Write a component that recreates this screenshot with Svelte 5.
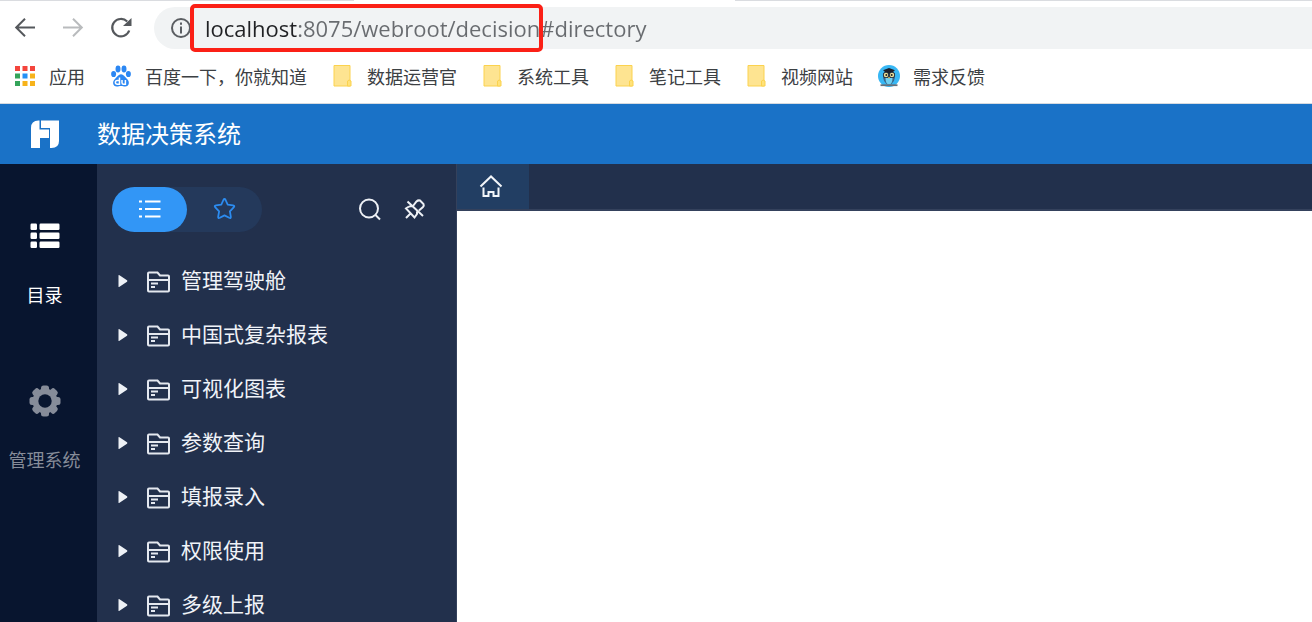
<script>
  let url = $state('localhost:8075/webroot/decision#directory');
  let view = $state('list');

  const bookmarks = [
    { label: '应用', icon: 'apps' },
    { label: '百度一下，你就知道', icon: 'baidu' },
    { label: '数据运营官', icon: 'folder' },
    { label: '系统工具', icon: 'folder' },
    { label: '笔记工具', icon: 'folder' },
    { label: '视频网站', icon: 'folder' },
    { label: '需求反馈', icon: 'owl' },
  ];

  const appColors = ['#f4453c', '#f4453c', '#f4453c', '#34a45a', '#2490f5', '#f7b31b', '#34a45a', '#f7b31b', '#f7b31b'];

  const folders = ['管理驾驶舱', '中国式复杂报表', '可视化图表', '参数查询', '填报录入', '权限使用', '多级上报'];
</script>

<div class="page">
  <div class="browser">
    <div class="tabline"><span></span><span></span></div>
    <div class="toolbar">
      <button aria-label="后退">
        <svg width="22" height="22" viewBox="0 0 22 22" fill="none" stroke="#55585c" stroke-width="2"><path d="M21 10.500H2.500M11 1.800L2.200 10.500l8.800 8.700" /></svg>
      </button>
      <button aria-label="前进">
        <svg width="22" height="22" viewBox="0 0 22 22" fill="none" stroke="#b9bbbd" stroke-width="2"><path d="M1 10.500h18.500M11 1.800l8.800 8.700-8.800 8.700" /></svg>
      </button>
      <button aria-label="刷新">
        <svg width="22" height="22" viewBox="0 0 22 22"><path d="M19.200 13.500A8.700 8.700 0 1 1 17.200 4.600" fill="none" stroke="#55585c" stroke-width="2.200" /><path d="M21.500 1V9H13z" fill="#55585c" /></svg>
      </button>
      <div class="omnibox">
        <svg width="22" height="22" viewBox="0 0 22 22"><circle cx="11" cy="11" r="9" fill="none" stroke="#5b5e62" stroke-width="2" /><path d="M10 5.500h2v2.200h-2zM10 9.500h2v7h-2z" fill="#5b5e62" /></svg>
        <input class="url" aria-label="地址" bind:value={url} />
        <div class="marker"></div>
      </div>
    </div>
    <nav class="bookmarks">
      {#each bookmarks as b}
        <a href="#directory">
          {#if b.icon === 'apps'}
            <svg width="20" height="20" viewBox="0 0 20 20">
              {#each appColors as c, i}
                <rect x={(i % 3) * 7.5} y={Math.floor(i / 3) * 7.5} width="5" height="5" fill={c} />
              {/each}
            </svg>
          {:else if b.icon === 'baidu'}
            <svg width="20" height="22" viewBox="0 0 20 22" fill="#2b87f3">
              <ellipse cx="2.600" cy="9" rx="2.500" ry="3.100" />
              <ellipse cx="7" cy="4" rx="2.500" ry="3.400" />
              <ellipse cx="13" cy="4" rx="2.500" ry="3.400" />
              <ellipse cx="17.400" cy="9" rx="2.500" ry="3.100" />
              <path d="M10 9.300c2.600 0 3.600 2.400 5.600 4.100 3.600 3 2.700 8-1.400 8-1.600 0-2.600-.5-4.200-.5s-2.600.5-4.200.5c-4.100 0-5-5-1.400-8C6.400 11.700 7.400 9.300 10 9.300z" />
              <path d="M8.500 12.500v6.800H6.300a1.900 1.900 0 0 1 0-3.900h2.200M11 15v2.800c0 1 .5 1.500 1.400 1.500h2V15" fill="none" stroke="#fff" stroke-width="1.500" />
            </svg>
          {:else if b.icon === 'folder'}
            <svg width="20" height="22" viewBox="0 0 20 22" stroke="#fbd24e"><path d="M1 .5h16v20.500H1z" fill="#fee491" /><path d="M14.500 21v-5q1.500-2 3.500 0v5z" fill="#ffe27a" /></svg>
          {:else}
            <svg width="20" height="22" viewBox="1 0 20 22" overflow="visible">
              <circle cx="11" cy="11" r="11" fill="#38b7f4" />
              <path d="M5 8Q4.500 19 11 19.500 17.500 19 17 8z" fill="#3a6588" />
              <path d="M7.500 13h7q0 6-3.500 6.500Q7.500 19 7.500 13z" fill="#6fd0f2" />
              <path d="M5 5.200L11 3l6 2.200-1.500 1V9h-9V6.200z" fill="#1c1f2b" />
              <circle cx="8" cy="10" r="3.100" fill="#263442" /><circle cx="14" cy="10" r="3.100" fill="#263442" />
              <circle cx="8" cy="10" r="2.200" fill="#efe19b" /><circle cx="14" cy="10" r="2.200" fill="#efe19b" />
              <circle cx="8.300" cy="10" r="1" fill="#222" /><circle cx="13.700" cy="10" r="1" fill="#222" />
              <path d="M10 12h2l-1 2z" fill="#e8b13c" />
              <path d="M2.500 20.200h17" stroke="#66717c" stroke-width="1.800" />
            </svg>
          {/if}
          <span>{b.label}</span>
        </a>
      {/each}
    </nav>
  </div>

  <header>
    <svg width="28" height="28" viewBox="0 0 28 28" fill="#fff">
      <path d="M7.500.5H8.500V9.500H18V18H9V28H0V8Q0 .5 7.500.5z" />
      <path d="M10 .5H28V21Q28 28 20.500 28H19V8H10z" />
    </svg>
    <h1>数据决策系统</h1>
  </header>

  <div class="body">
    <nav class="rail">
      <button class="active">
        <svg width="32" height="32" viewBox="0 0 32 32" fill="#fff">
          {#each [3.5, 12.5, 21.5] as y}
            <rect x="1.500" {y} width="6.500" height="6.500" rx="1.200" /><rect x="10.500" {y} width="20" height="6.500" rx="1.200" />
          {/each}
        </svg>
        <span>目录</span>
      </button>
      <button>
        <svg width="32" height="32" viewBox="-16 -16 32 32">
          <g fill="#868c99">
            {#each [0, 45, 90, 135] as a}
              <rect x="-4" y="-15.500" width="8" height="31" rx="2.500" transform="rotate({a})" />
            {/each}
            <circle r="12.500" />
          </g>
          <circle r="6.700" fill="#08152f" />
        </svg>
        <span>管理系统</span>
      </button>
    </nav>

    <aside>
      <div class="tools">
        <div class="switch">
          <button class:on={view === 'list'} aria-label="目录列表" onclick={() => (view = 'list')}>
            <svg width="24" height="24" viewBox="0 0 24 24" fill="none" stroke={view === 'list' ? '#fff' : '#3296f6'} stroke-width="2"><path d="M1 3.500h3M7 3.500H22.500M1 11h3M7 11H22.500M1 18.500h3M7 18.500H22.500" /></svg>
          </button>
          <button class:on={view === 'star'} aria-label="收藏" onclick={() => (view = 'star')}>
            <svg width="24" height="24" viewBox="0.500 1 24 24" fill="none" stroke={view === 'star' ? '#fff' : '#2c8cf0'} stroke-width="1.800" stroke-linejoin="round"><path d="M10.900 3Q12 1 13.100 3l2.100 4.600 5.300.8q2.200.4.700 2l-3.800 3.900.9 5.300q.3 2.100-1.600 1.200L12 18.400l-4.700 2.400q-1.900.9-1.600-1.200l.9-5.300-3.800-3.900q-1.500-1.600.7-2l5.300-.8z" /></svg>
          </button>
        </div>
        <div class="actions">
          <button aria-label="搜索">
            <svg width="24" height="24" viewBox="0 0 24 24" fill="none" stroke="#eef1f6" stroke-width="2"><circle cx="11" cy="10.500" r="9" /><path d="M17.500 17l4.500 4.500" /></svg>
          </button>
          <button aria-label="取消固定">
            <svg width="24" height="24" viewBox="0 1 24 24" fill="none" stroke="#eef1f6" stroke-width="2"><path d="M4.500 4.500L20 19M3 21l4.500-4.500M6 9.500L3 11.500l8.500 9 2.500-3.500V14.500M10 9L13.500 4.500Q15 3 17 3.500l3.500 3.500q.7 1.500-.5 3L16 13.500M6 9.500l3-.5" /></svg>
          </button>
        </div>
      </div>
      <ul>
        {#each folders as name}
          <li>
            <button>
              <svg width="10" height="14" viewBox="0 0 10 14"><path d="M.5 1.500Q.5.500 1.500 1.200L9 6.300q.8.700 0 1.400L1.500 12.800Q.5 13.500.5 12.500z" fill="#eef1f6" /></svg>
              <svg width="24" height="24" viewBox="0 0 24 24" fill="none" stroke="#e4e8ef" stroke-width="2"><path d="M2 21.500V4.500q0-1 1-1h8.500l2.500 3h8q1 0 1 1v14q0 1-1 1H3q-1 0-1-1zM2 11h21M5 14.500h7M5 18h4" /></svg>
              <span>{name}</span>
            </button>
          </li>
        {/each}
      </ul>
    </aside>

    <main>
      <div class="tabs">
        <button aria-label="首页">
          <svg width="24" height="24" viewBox="0 1 24 24" fill="none" stroke="#f2f5f9" stroke-width="2"><path d="M1.500 12.500L12 2.500l10.500 10M4.500 13.500v8.500h5v-4h5v4h5v-8.500" /></svg>
        </button>
      </div>
    </main>
  </div>
</div>

<style>
  :global(body) { margin: 0; background: #fff; }
  .page {
    height: 100vh;
    display: flex;
    flex-direction: column;
    overflow: hidden;
    font-family: "Noto Sans CJK SC", sans-serif;
  }
  button { border: 0; padding: 0; background: none; color: inherit; font: inherit; cursor: pointer; }
  svg { display: block; flex: none; }

  .browser { border-bottom: 1px solid #d5dae0; }
  .tabline { display: flex; justify-content: space-between; height: 1px; }
  .tabline span { width: 27%; background: #dadce0; }
  .tabline span:last-child { width: 44%; }
  .toolbar { display: flex; align-items: center; gap: 26px; padding: 6px 0 0 14px; }
  .omnibox {
    position: relative;
    flex: 1;
    display: flex;
    align-items: center;
    gap: 13px;
    height: 42px;
    margin-left: -4px;
    padding-left: 16px;
    border-radius: 21px 0 0 21px;
    background: #f1f3f4;
  }
  .url {
    flex: 1;
    min-width: 0;
    padding: 0;
    border: 0;
    outline: 0;
    font: 22px/32px "Open Sans", sans-serif;
    color: transparent;
    background: linear-gradient(90deg, #202124 92px, #686b6f 92px);
    background-clip: text;
  }
  .marker {
    position: absolute;
    left: 36px;
    top: -3px;
    width: 345px;
    height: 40px;
    border: 4px solid #fb2016;
    border-radius: 5px;
    pointer-events: none;
  }
  .bookmarks { display: flex; align-items: center; gap: 26px; height: 54px; padding-left: 15px; }
  .bookmarks a {
    display: flex;
    align-items: center;
    gap: 14px;
    color: #3c4043;
    font-size: 18px;
    line-height: 26px;
    text-decoration: none;
    white-space: nowrap;
  }

  header { display: flex; align-items: center; gap: 38px; height: 60px; padding-left: 31px; background: #1a72c7; color: #fff; }
  h1 { margin: 0; padding-bottom: 2px; font-size: 24px; line-height: 36px; font-weight: 400; }

  .body { flex: 1; min-height: 0; display: flex; }
  .rail {
    flex: none;
    box-sizing: border-box;
    width: 97px;
    padding: 56px 8px 0 0;
    display: flex;
    flex-direction: column;
    gap: 75px;
    background: #08152f;
    color: #868c99;
  }
  .rail button { display: flex; flex-direction: column; align-items: center; gap: 26px; font-size: 18px; line-height: 32px; }
  .rail .active { color: #fff; }

  aside { flex: none; box-sizing: border-box; width: 360px; border-right: 1px solid #34415c; background: #22304c; color: #f0f3f8; }
  .tools { display: flex; align-items: center; justify-content: space-between; padding: 23px 29px 0 15px; }
  .switch { display: flex; border-radius: 23px; background: #24395b; }
  .switch button { display: grid; place-items: center; width: 75px; height: 45px; border-radius: 23px; }
  .switch .on { background: #3296f6; }
  .actions { display: flex; gap: 21px; }
  ul { list-style: none; margin: 0; padding: 22px 0 0 21px; }
  li button { display: flex; align-items: center; height: 54px; font-size: 21px; line-height: 32px; }
  li span { padding-bottom: 4px; }
  li svg + svg { margin: 0 11px 0 18px; }

  main { flex: 1; min-width: 0; background: #fff; }
  .tabs { display: flex; height: 45px; border-bottom: 2px solid #34415c; background: #22304c; }
  .tabs button { display: grid; place-items: center; width: 72px; padding-right: 4px; background: #223e63; }
</style>
